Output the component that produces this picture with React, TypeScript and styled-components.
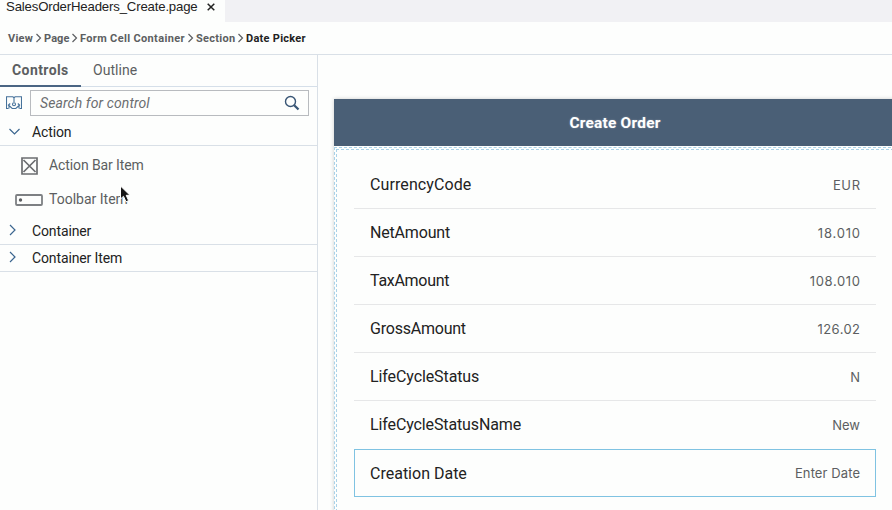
import React from 'react';
import styled, { createGlobalStyle, css } from 'styled-components';

const GlobalStyle = createGlobalStyle`
  * { box-sizing: border-box; }
  body { margin: 0; background: #fdfefd; overflow: hidden; }
`;

const Page = styled.div`
  display: flex;
  flex-direction: column;
  width: 892px;
  height: 510px;
  overflow: hidden;
  background: #fdfefd;
  color: #222;
  font-family: Roboto, 'Liberation Sans', sans-serif;
`;

const TabStrip = styled.div`
  display: flex;
  flex: none;
  height: 22px;
  background: #f1f1f4;
`;

const FileTab = styled.div`
  display: flex;
  align-items: flex-start;
  width: 225px;
  padding-left: 6px;
  background: #fdfefd;
  font: 13.2px/14px 'Liberation Sans', sans-serif;
  letter-spacing: -0.17px;
  white-space: nowrap;
`;

const CloseIcon = styled.svg`
  margin: 3px 0 0 9px;
`;

const Breadcrumbs = styled.nav`
  display: flex;
  flex: none;
  align-items: center;
  height: 33px;
  padding-left: 8px;
  border-bottom: 1px solid #d9e0e7;
  font-size: 11px;
  font-weight: 700;
`;

const Crumb = styled.span<{ $width: number; $current?: boolean; $spacing: number }>`
  width: ${(p) => p.$width}px;
  color: ${(p) => (p.$current ? '#222' : '#5c5e61')};
  letter-spacing: ${(p) => p.$spacing}px;
  white-space: nowrap;
`;

const CrumbArrow = styled.svg`
  flex: none;
  margin: 0 2px;
`;

const Workspace = styled.div`
  display: flex;
  flex: 1;
  min-height: 0;
`;

const Sidebar = styled.aside`
  flex: none;
  width: 318px;
  border-right: 1px solid #d9e0e7;
`;

const PanelTabs = styled.div`
  display: flex;
  height: 32px;
  border-bottom: 1px solid #d5dfe9;
`;

const PanelTab = styled.div<{ $active?: boolean }>`
  height: 32px;
  padding: 0 12px;
  color: #5c5e61;
  font-size: 14px;
  line-height: 31px;
  ${(p) =>
    p.$active
      ? css`
          width: 81px;
          letter-spacing: 0.42px;
          font-weight: 700;
          border-bottom: 2px solid #4a6583;
        `
      : css`
          letter-spacing: 0.05px;
        `}
`;

const SearchRow = styled.div`
  display: flex;
  align-items: center;
  height: 32px;
  padding: 0 8px 0 6px;
  gap: 8px;
`;

const SearchField = styled.div`
  display: flex;
  flex: 1;
  align-items: center;
  justify-content: space-between;
  height: 26px;
  padding: 0 8px 0 9px;
  border: 1px solid #b8bbbf;
  color: #6b6d70;
  font-size: 14px;
  font-style: italic;
  letter-spacing: 0.1px;
`;

const GroupHeader = styled.div`
  display: flex;
  align-items: center;
  height: 27px;
  padding-left: 8px;
  border-bottom: 1px solid #d9e0e7;
  font-size: 14px;
  letter-spacing: -0.12px;
`;

const GroupTitle = styled.span`
  line-height: 16px;
`;

const GroupIcon = styled.svg`
  flex: none;
  margin-right: 12px;
`;

const ControlList = styled.div`
  display: flex;
  flex-direction: column;
  height: 72px;
  padding-top: 3px;
`;

const ControlItem = styled.div<{ $spacing: number }>`
  display: flex;
  position: relative;
  align-items: center;
  height: 34px;
  padding-left: 14px;
  gap: 5px;
  color: #5c5e61;
  font-size: 14px;
  letter-spacing: ${(p) => p.$spacing}px;
`;

const ControlName = styled.span`
  padding-bottom: 2px;
`;

const IconSlot = styled.span<{ $inset?: number }>`
  display: flex;
  justify-content: center;
  width: 30px;
  padding-left: ${(p) => p.$inset ?? 0}px;
`;

const Cursor = styled.svg`
  position: absolute;
  left: 119px;
  top: 2px;
`;

const Canvas = styled.main`
  flex: 1;
  padding: 44px 0 0 16px;
  overflow: hidden;
`;

const Device = styled.section`
  width: 562px;
  height: 460px;
  background: #fdfefd;
  box-shadow: 0 0 4px rgba(0, 0, 0, 0.2);
`;

const DeviceHeader = styled.header`
  height: 47px;
  background: #4a5f76;
  color: #fff;
  font-size: 15.4px;
  font-weight: 700;
  line-height: 49px;
  text-align: center;
  letter-spacing: 0.25px;
  text-shadow: 0 0 2px rgba(255, 255, 255, 0.35);
`;

const OuterDashes = styled.div`
  height: 412px;
  margin-top: 1px;
  padding: 1px;
  border: 1px dashed #a9d2e8;
`;

const FormCells = styled.div`
  height: 408px;
  padding: 11px 0 0 17px;
  border: 1px dashed #a9d2e8;
`;

const Cell = styled.div<{ $selected?: boolean }>`
  display: flex;
  align-items: center;
  justify-content: space-between;
  width: 522px;
  height: 48px;
  padding: 0 16px;
  border-bottom: 1px solid #e6e7e8;
  ${(p) =>
    p.$selected &&
    css`
      padding: 0 15px;
      border: 1px solid #7fc3e2;
    `}

  &:nth-last-child(2) {
    border-bottom-color: transparent;
  }
`;

const CellLabel = styled.span<{ $spacing: number }>`
  font-size: 16px;
  letter-spacing: ${(p) => p.$spacing}px;
`;

const CellValue = styled.span<{ $spacing: number }>`
  color: #5c5e61;
  font-family: Inter, sans-serif;
  font-size: 13px;
  letter-spacing: ${(p) => p.$spacing}px;
  margin-right: ${(p) => -p.$spacing}px;
`;

const crumbs = [
  { text: 'View', width: 25, spacing: 0.2 },
  { text: 'Page', width: 25, spacing: 0.1 },
  { text: 'Form Cell Container', width: 105, spacing: 0.34 },
  { text: 'Section', width: 39, spacing: 0.28 },
  { text: 'Date Picker', width: 62, spacing: 0.27 },
];

const cells = [
  { label: 'CurrencyCode', value: 'EUR', spacing: 0.1, valueSpacing: 0.6 },
  { label: 'NetAmount', value: '18.010', spacing: -0.18, valueSpacing: 0.8 },
  { label: 'TaxAmount', value: '108.010', spacing: -0.28, valueSpacing: 0.65 },
  { label: 'GrossAmount', value: '126.02', spacing: -0.22, valueSpacing: 0.4 },
  { label: 'LifeCycleStatus', value: 'N', spacing: -0.1, valueSpacing: 0 },
  { label: 'LifeCycleStatusName', value: 'New', spacing: -0.12, valueSpacing: 0 },
  { label: 'Creation Date', value: 'Enter Date', spacing: 0, valueSpacing: 0.1 },
];

function Chevron({ open }: { open?: boolean }) {
  return (
    <GroupIcon width="12" height="14" viewBox="0 0 12 14" fill="none" stroke="#3b668f" strokeWidth="1.2">
      <path d={open ? 'M1.5 4 6.5 9 11.5 4' : 'M2 1 7 6 2 11'} />
    </GroupIcon>
  );
}

export default function App() {
  return (
    <>
      <GlobalStyle />
      <Page>
        <TabStrip>
          <FileTab>
            SalesOrderHeaders_Create.page
            <CloseIcon width="8" height="8" viewBox="0 0 8 8" stroke="#222" strokeWidth="1.5">
              <path d="M.7.7 7.3 7.3M7.3.7.7 7.3" />
            </CloseIcon>
          </FileTab>
        </TabStrip>
        <Breadcrumbs>
          {crumbs.map((c, i) => (
            <React.Fragment key={c.text}>
              {i > 0 && (
                <CrumbArrow width="7" height="10" viewBox="0 0 7 10" fill="none" stroke="#5c5e61" strokeWidth="1.2">
                  <path d="M1.5 1 5.5 5 1.5 9" />
                </CrumbArrow>
              )}
              <Crumb $width={c.width} $spacing={c.spacing} $current={i === crumbs.length - 1}>
                {c.text}
              </Crumb>
            </React.Fragment>
          ))}
        </Breadcrumbs>
        <Workspace>
          <Sidebar>
            <PanelTabs>
              <PanelTab $active>Controls</PanelTab>
              <PanelTab>Outline</PanelTab>
            </PanelTabs>
            <SearchRow>
              <svg width="16" height="14" viewBox="0 0 16 14" fill="none" stroke="#46729b" strokeWidth="1.1">
                <path d="M2.5 12.5H.5V.8H7L8 2 9 .8h6.5v11.7H13.5M8 2v4" />
                <circle cx="8" cy="8.2" r="1.5" />
                <path d="M3 12.5V9.5M2 9.5 4.2 7.5M3 9.5l3.2 3h3.6l3.2-3v3M14 9.5 11.8 7.5" />
              </svg>
              <SearchField>
                Search for control
                <svg width="16" height="16" viewBox="0 0 16 16" fill="none" stroke="#385575">
                  <circle cx="6.5" cy="6.5" r="5" strokeWidth="1.4" />
                  <path d="M10.2 10.2 14.5 14.5" strokeWidth="2.3" />
                </svg>
              </SearchField>
            </SearchRow>
            <GroupHeader>
              <Chevron open />
              <GroupTitle>Action</GroupTitle>
            </GroupHeader>
            <ControlList>
              <ControlItem $spacing={-0.1}>
                <IconSlot $inset={1}>
                  <svg width="17" height="18" viewBox="0 0 17 18" fill="none" stroke="#6b6d70" strokeWidth="1.7">
                    <path d="M1 1H16V17H1ZM2.5 3 14.5 15M14.5 3 2.5 15" />
                  </svg>
                </IconSlot>
                <ControlName>Action Bar Item</ControlName>
              </ControlItem>
              <ControlItem $spacing={0}>
                <IconSlot>
                  <svg width="28" height="12" viewBox="0 0 28 12" fill="none" stroke="#7d8083" strokeWidth="1.8">
                    <rect x="1" y="1" width="26" height="10" rx="1" />
                    <circle cx="5.5" cy="6" r="1.7" fill="#5c5e61" stroke="none" />
                  </svg>
                </IconSlot>
                <ControlName>Toolbar Item</ControlName>
                <Cursor width="14" height="18" viewBox="0 0 14 18">
                  <path d="M1.5 1V14L4.5 11.3 7 16.8 9.6 15.6 7.2 10.3H11Z" fill="#151515" stroke="#fff" />
                </Cursor>
              </ControlItem>
            </ControlList>
            <GroupHeader>
              <Chevron />
              <GroupTitle>Container</GroupTitle>
            </GroupHeader>
            <GroupHeader>
              <Chevron />
              <GroupTitle>Container Item</GroupTitle>
            </GroupHeader>
          </Sidebar>
          <Canvas>
            <Device>
              <DeviceHeader>Create Order</DeviceHeader>
              <OuterDashes>
                <FormCells>
                  {cells.map((c, i) => (
                    <Cell key={c.label} $selected={i === cells.length - 1}>
                      <CellLabel $spacing={c.spacing}>{c.label}</CellLabel>
                      <CellValue $spacing={c.valueSpacing}>{c.value}</CellValue>
                    </Cell>
                  ))}
                </FormCells>
              </OuterDashes>
            </Device>
          </Canvas>
        </Workspace>
      </Page>
    </>
  );
}
